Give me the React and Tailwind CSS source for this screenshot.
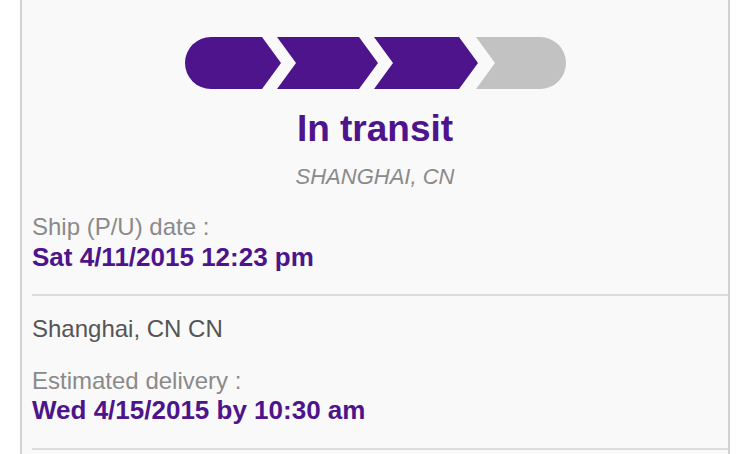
export default function App() {
  const purple = "#4d148c";
  return (
    <div
      className="w-[750px] h-[454px] overflow-hidden bg-white px-[20px]"
      style={{ fontFamily: '"Liberation Sans", Arial, sans-serif' }}
    >
      <div className="h-full border-x-2 border-[#d5d1d3] bg-[#f9f9f9] pl-[10px]">
        <div className="flex flex-col items-center pt-[37px] -ml-[10px]">
          <svg width="381" height="52" viewBox="0 0 381 52">
            <path d="M26 0 H77 L96 26 L77 52 H26 A26 26 0 0 1 26 0 Z" fill={purple} />
            <path d="M92 0 H174 L193 26 L174 52 H92 L111 26 Z" fill={purple} />
            <path d="M189 0 H274 L293 26 L274 52 H189 L208 26 Z" fill={purple} />
            <path d="M291 0 H355 A26 26 0 0 1 355 52 H291 L310 26 Z" fill="#c2c2c2" />
          </svg>
          <div className="mt-[24px] text-[37px] leading-[32px] font-bold text-[#4d148c]">
            In transit
          </div>
          <div className="mt-[22px] text-[22px] leading-[20px] italic text-[#8a8a8a]">
            SHANGHAI, CN
          </div>
        </div>
        <div className="mt-[26px] border-b-2 border-[#dcdcdc] pb-[22px]">
          <div className="text-[24px] leading-[28px] text-[#8a8a8a]">Ship (P/U) date :</div>
          <div className="mt-[1px] text-[26px] leading-[30px] font-bold text-[#4d148c]">
            Sat 4/11/2015 12:23 pm
          </div>
        </div>
        <div className="pt-[19px] border-b-2 border-[#dcdcdc] pb-[23px]">
          <div className="text-[24px] leading-[28px] text-[#555555]">Shanghai, CN CN</div>
          <div className="mt-[24px] text-[24px] leading-[28px] text-[#8a8a8a]">Estimated delivery :</div>
          <div className="text-[26px] leading-[30px] font-bold text-[#4d148c]">
            Wed 4/15/2015 by 10:30 am
          </div>
        </div>
      </div>
    </div>
  );
}
